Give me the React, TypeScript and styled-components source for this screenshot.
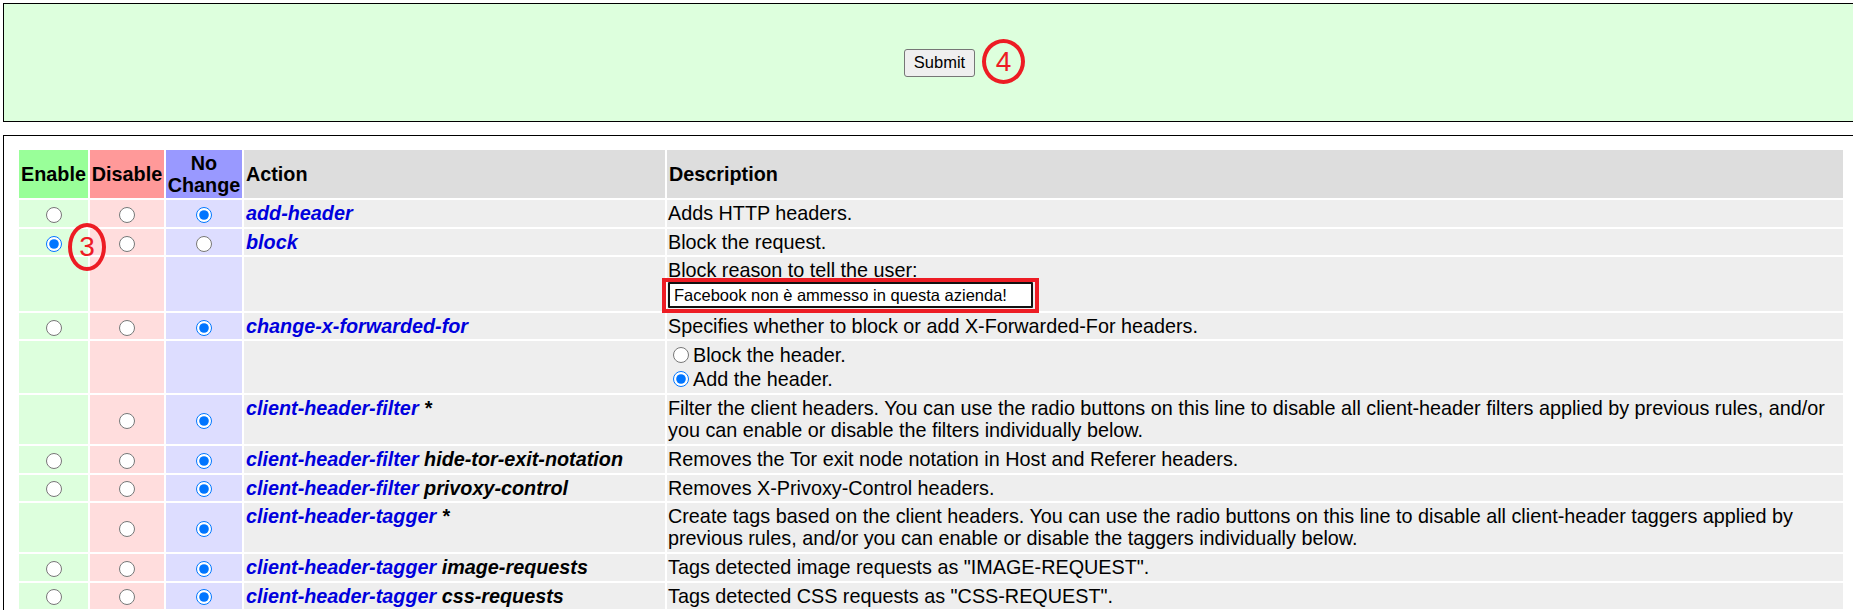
import styled, { createGlobalStyle } from "styled-components";

type Pick3 = "enable" | "disable" | "none" | null;

interface Row {
  id: string;
  action?: string;
  param?: string;
  description?: string;
  checked?: Pick3;
  noEnable?: boolean;
  kind?: "reason" | "forward";
}

const rows: Row[] = [
  { id: "add-header", action: "add-header", description: "Adds HTTP headers.", checked: "none" },
  { id: "block", action: "block", description: "Block the request.", checked: "enable" },
  { id: "block-reason", kind: "reason" },
  {
    id: "cxff",
    action: "change-x-forwarded-for",
    description: "Specifies whether to block or add X-Forwarded-For headers.",
    checked: "none",
  },
  { id: "cxff-opts", kind: "forward" },
  {
    id: "chf",
    action: "client-header-filter",
    param: "*",
    noEnable: true,
    checked: "none",
    description:
      "Filter the client headers. You can use the radio buttons on this line to disable all client-header filters applied by previous rules, and/or you can enable or disable the filters individually below.",
  },
  {
    id: "chf-tor",
    action: "client-header-filter",
    param: "hide-tor-exit-notation",
    checked: "none",
    description: "Removes the Tor exit node notation in Host and Referer headers.",
  },
  {
    id: "chf-pc",
    action: "client-header-filter",
    param: "privoxy-control",
    checked: "none",
    description: "Removes X-Privoxy-Control headers.",
  },
  {
    id: "cht",
    action: "client-header-tagger",
    param: "*",
    noEnable: true,
    checked: "none",
    description:
      "Create tags based on the client headers. You can use the radio buttons on this line to disable all client-header taggers applied by previous rules, and/or you can enable or disable the taggers individually below.",
  },
  {
    id: "cht-img",
    action: "client-header-tagger",
    param: "image-requests",
    checked: "none",
    description: 'Tags detected image requests as "IMAGE-REQUEST".',
  },
  {
    id: "cht-css",
    action: "client-header-tagger",
    param: "css-requests",
    checked: "none",
    description: 'Tags detected CSS requests as "CSS-REQUEST".',
  },
];

export default function App() {
  return (
    <Page>
      <GlobalStyle />
      <SubmitBox>
        <SubmitButton type="button">Submit</SubmitButton>
      </SubmitBox>

      <TableBox>
        <ActionTable>
          <colgroup>
            <Col $w={69} />
            <Col $w={74} />
            <Col $w={76} />
            <Col $w={421} />
            <Col $w={1176} />
          </colgroup>
          <thead>
            <tr>
              <HeadCell $tone="enable">Enable</HeadCell>
              <HeadCell $tone="disable">Disable</HeadCell>
              <HeadCell $tone="none">
                No
                <br />
                Change
              </HeadCell>
              <HeadCell $tone="plain">Action</HeadCell>
              <HeadCell $tone="plain">Description</HeadCell>
            </tr>
          </thead>
          <tbody>
            {rows.map((r) => (
              <tr key={r.id}>
                <RadioCell $tone="enable">
                  {r.checked && !r.noEnable && (
                    <Radio name={r.id} defaultChecked={r.checked === "enable"} />
                  )}
                </RadioCell>
                <RadioCell $tone="disable">
                  {r.checked && <Radio name={r.id} defaultChecked={r.checked === "disable"} />}
                </RadioCell>
                <RadioCell $tone="none">
                  {r.checked && <Radio name={r.id} defaultChecked={r.checked === "none"} />}
                </RadioCell>
                <ActionCell>
                  {r.action && <ActionName>{r.action}</ActionName>}
                  {r.param && <> {r.param}</>}
                </ActionCell>
                <DescCell>
                  {r.description}
                  {r.kind === "reason" && (
                    <>
                      <div>Block reason to tell the user:</div>
                      <ReasonInput
                        type="text"
                        defaultValue="Facebook non è ammesso in questa azienda!"
                      />
                    </>
                  )}
                  {r.kind === "forward" && (
                    <>
                      <Option>
                        <Radio name="cxff-mode" />
                        Block the header.
                      </Option>
                      <Option>
                        <Radio name="cxff-mode" defaultChecked />
                        Add the header.
                      </Option>
                    </>
                  )}
                </DescCell>
              </tr>
            ))}
          </tbody>
        </ActionTable>
      </TableBox>

      <Marker $x={982} $y={39} $w={43} $h={45}>4</Marker>
      <Marker $x={68} $y={223} $w={38} $h={48}>3</Marker>
      <Highlight />
    </Page>
  );
}

function Radio(props: { name: string; defaultChecked?: boolean }) {
  return <RadioInput type="radio" {...props} />;
}

const tones = {
  enable: { head: "#99ff99", body: "#ddffdd" },
  disable: { head: "#ff9999", body: "#ffdddd" },
  none: { head: "#9999ff", body: "#ddddff" },
  plain: { head: "#dddddd", body: "#eeeeee" },
};

type Tone = keyof typeof tones;

const GlobalStyle = createGlobalStyle`
  html, body {
    margin: 0;
    padding: 0;
    background: #fff;
    overflow: hidden;
  }
  body {
    font-family: "Liberation Sans", Arial, sans-serif;
    font-size: 19.8px;
    color: #000;
  }
`;

const Page = styled.div`
  position: relative;
  display: flex;
  flex-direction: column;
  align-items: flex-start;
  gap: 13px;
  padding: 3px;
`;

const SubmitBox = styled.div`
  box-sizing: border-box;
  width: 1873px;
  height: 119px;
  flex-shrink: 0;
  background: #ddffdd;
  border: 1px solid #000;
  display: flex;
  align-items: center;
  justify-content: center;
`;

const SubmitButton = styled.button`
  box-sizing: border-box;
  width: 71px;
  height: 28px;
  padding: 0;
  background: #efefef;
  border: 1px solid #767676;
  border-radius: 3px;
  font-family: "Liberation Sans", Arial, sans-serif;
  font-size: 16.5px;
  color: #000;
`;

const TableBox = styled.div`
  box-sizing: border-box;
  width: 1856px;
  flex-shrink: 0;
  background: #fff;
  border: 1px solid #000;
  padding: 12px 13px;
`;

const ActionTable = styled.table`
  width: 100%;
  table-layout: fixed;
  border-collapse: separate;
  border-spacing: 2px;
  font-size: 19.8px;
`;

const Col = styled.col<{ $w: number }>`
  width: ${(p) => p.$w}px;
`;

const HeadCell = styled.th<{ $tone: Tone }>`
  background: ${(p) => tones[p.$tone].head};
  padding: 2px 1px;
  line-height: 22px;
  font-weight: bold;
  white-space: nowrap;
  text-align: ${(p) => (p.$tone === "plain" ? "left" : "center")};
  vertical-align: middle;

  &:nth-child(n + 4) {
    padding-left: 2px;
  }
`;

const RadioCell = styled.td<{ $tone: Tone }>`
  background: ${(p) => tones[p.$tone].body};
  padding: 2px;
  line-height: 22.2px;
  text-align: center;
  vertical-align: middle;
`;

const ActionCell = styled.td`
  background: #eeeeee;
  padding: 2.1px 2px 2.3px;
  line-height: 22.2px;
  vertical-align: top;
  font-weight: bold;
  font-style: italic;
`;

const ActionName = styled.span`
  color: #0000dd;
`;

const DescCell = styled.td`
  background: #eeeeee;
  padding: 2.1px 2px 2.3px 1px;
  line-height: 22.2px;
  vertical-align: top;
`;

const RadioInput = styled.input`
  width: 16px;
  height: 16px;
  margin: 0;
  vertical-align: middle;
`;

const Option = styled.div`
  display: flex;
  align-items: center;
  height: 23.7px;

  & > input {
    margin: 0 4px 0 5px;
  }
`;

const ReasonInput = styled.input`
  display: block;
  box-sizing: border-box;
  width: 365px;
  height: 26px;
  margin: 1px 0 0 0;
  padding: 1px 4px;
  border: 2px solid #111;
  border-radius: 1px;
  background: #fff;
  font-family: "Liberation Sans", Arial, sans-serif;
  font-size: 16.5px;
  color: #000;
`;

const Marker = styled.div<{ $x: number; $y: number; $w: number; $h: number }>`
  position: absolute;
  left: ${(p) => p.$x}px;
  top: ${(p) => p.$y}px;
  width: ${(p) => p.$w}px;
  height: ${(p) => p.$h}px;
  box-sizing: border-box;
  border: 4px solid #ed1c24;
  border-radius: 50%;
  display: grid;
  place-items: center;
  color: #ed1c24;
  font-family: "Liberation Sans", Arial, sans-serif;
  font-size: 28px;
  line-height: 1;
  pointer-events: none;
`;

const Highlight = styled.div`
  position: absolute;
  left: 662px;
  top: 278px;
  width: 377px;
  height: 35px;
  box-sizing: border-box;
  border: 4px solid #ed1c24;
  pointer-events: none;
`;
